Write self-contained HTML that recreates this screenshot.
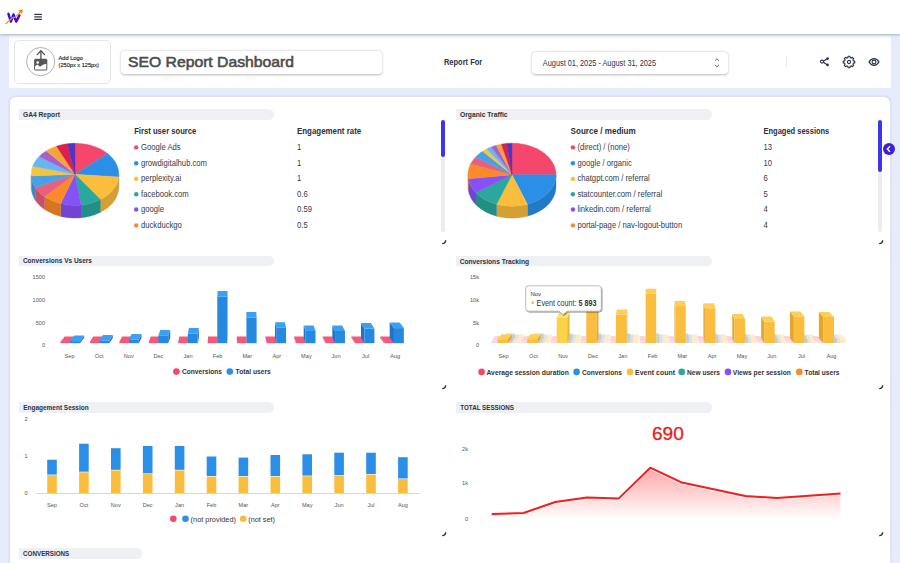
<!DOCTYPE html>
<html><head><meta charset="utf-8">
<style>
*{box-sizing:border-box;margin:0;padding:0}
html,body{width:900px;height:563px;overflow:hidden}
body{background:#e7ecfc;font-family:"Liberation Sans",sans-serif;position:relative}
.a{position:absolute}
.top{left:0;top:0;width:900px;height:34px;background:#fff;box-shadow:0 1px 2.5px rgba(80,95,140,0.45);z-index:2}
.hdr{left:9px;top:35px;width:882px;height:52.7px;background:linear-gradient(#eef0f3 0px,#f6f7f8 2px,#fff 5px)}
.card{left:8.7px;top:96.3px;width:882px;height:480px;background:#fff;border-radius:7px;border:1px solid #dde2ee;box-shadow:0 0 1.5px rgba(120,130,170,0.3)}
.tb{height:10.5px;background:#eef0f4;border-radius:0 6px 6px 0}
.sb{width:3.5px;background:#ececf0;border-radius:2px}
.sbt{width:3.5px;background:#3b35f0;border-radius:2px}
svg{position:absolute;left:0;top:0}
</style></head><body>

<div class="a top"></div>
<svg width="50" height="34" viewBox="0 0 50 34" style="left:0;top:0;z-index:3">
<path d="M8.4 13.8 L10.9 21.6 L13.5 14.4 L16.2 21.6 L19.4 15.4" fill="none" stroke="#3410e0" stroke-width="2.4" stroke-linejoin="round" stroke-linecap="round"/>
<path d="M6.2 23.5 L12.3 17.8 L15 17.2 L20.8 11.6" fill="none" stroke="#f7920f" stroke-width="1.3" stroke-linecap="round"/>
<path d="M23 9.3 L18.4 10.6 L21.7 13.8 Z" fill="#f07f10"/>
<rect x="34.3" y="13.8" width="7.6" height="1.2" fill="#2d3342"/>
<rect x="34.3" y="16.3" width="7.6" height="1.2" fill="#2d3342"/>
<rect x="34.3" y="18.8" width="7.6" height="1.2" fill="#2d3342"/>
</svg>
<div class="a hdr"></div>
<div class="a" style="left:13.5px;top:40.2px;width:97.5px;height:43.6px;border:1px solid #e4e6eb;border-radius:5px;background:#fff"></div>
<svg width="40" height="40" style="left:20px;top:42px">
<circle cx="20.7" cy="19.6" r="14.1" fill="none" stroke="#a0a0a0" stroke-width="0.8"/>
<rect x="14.1" y="16.7" width="13.2" height="11.8" rx="1.6" fill="#585858"/>
<path d="M15.1 27.5 L15.1 24.3 L17.3 22.6 L20 24.8 L23 22.8 L26.3 21.8 L26.3 27.5 Z" fill="#fff"/>
<circle cx="17.7" cy="20.5" r="1.3" fill="#fff"/>
<path d="M20.9 9 V20.5" stroke="#505050" stroke-width="1.3"/>
<path d="M17.2 12.6 L20.9 8.8 L24.6 12.6" fill="none" stroke="#505050" stroke-width="1.3" stroke-linecap="round"/>
</svg>
<div class="a" style="left:121px;top:51px;width:261px;height:23px;border-radius:4px;background:#fff;box-shadow:0 0.5px 2.5px rgba(0,0,0,0.28)"></div>
<div class="a" style="left:531.5px;top:52px;width:196px;height:22px;border-radius:4px;background:#fff;box-shadow:0 0.5px 2.5px rgba(0,0,0,0.28)"></div>
<svg width="12" height="14" style="left:711px;top:56px"><path d="M3.8 4.8 L5.9 2.8 L8 4.8 M3.8 8.8 L5.9 10.8 L8 8.8" fill="none" stroke="#555" stroke-width="0.9"/></svg>
<div class="a" style="left:785.5px;top:56px;width:1px;height:11px;background:#e4e6ec"></div>
<svg width="14" height="14" style="left:818px;top:55px">
<path d="M9.5 3.6 L5.4 6.2 M5.4 7.2 L9.5 9.9" fill="none" stroke="#2d3545" stroke-width="1.2"/>
<circle cx="9.6" cy="3.6" r="1.3" fill="#2d3545"/><circle cx="9.6" cy="9.9" r="1.3" fill="#2d3545"/><circle cx="4" cy="6.6" r="1.5" fill="none" stroke="#2d3545" stroke-width="1.1"/>
</svg>
<svg width="14" height="14" style="left:842.3px;top:54.8px">
<polygon points="5.28,2.84 5.84,2.65 6.09,1.27 7.91,1.27 8.16,2.65 8.72,2.84 9.25,3.1 10.41,2.31 11.69,3.59 10.9,4.75 11.16,5.28 11.35,5.84 12.73,6.09 12.73,7.91 11.35,8.16 11.16,8.72 10.9,9.25 11.69,10.41 10.41,11.69 9.25,10.9 8.72,11.16 8.16,11.35 7.91,12.73 6.09,12.73 5.84,11.35 5.28,11.16 4.75,10.9 3.59,11.69 2.31,10.41 3.1,9.25 2.84,8.72 2.65,8.16 1.27,7.91 1.27,6.09 2.65,5.84 2.84,5.28 3.1,4.75 2.31,3.59 3.59,2.31 4.75,3.1" fill="none" stroke="#2d3545" stroke-width="1.15" stroke-linejoin="round"/>
<circle cx="7" cy="7" r="1.6" fill="none" stroke="#2d3545" stroke-width="1.1"/>
</svg>
<svg width="14" height="10" style="left:867.2px;top:56.8px">
<path d="M2.1 5 C4.5 0.6 9.5 0.6 11.9 5 C9.5 9.4 4.5 9.4 2.1 5 Z" fill="none" stroke="#2d3545" stroke-width="1.3"/>
<circle cx="7" cy="5" r="1.9" fill="none" stroke="#2d3545" stroke-width="1.1"/>
</svg>
<div class="a card"></div>
<div class="a tb" style="left:18.7px;top:109.2px;width:255.5px;height:10.4px"></div>
<div class="a tb" style="left:456px;top:109.2px;width:255.5px;height:10.4px"></div>
<div class="a tb" style="left:18.7px;top:255.6px;width:255.5px;height:10.4px"></div>
<div class="a tb" style="left:456px;top:255.8px;width:255.5px;height:10.4px"></div>
<div class="a tb" style="left:18.7px;top:402.2px;width:255.5px;height:10.4px"></div>
<div class="a tb" style="left:456px;top:402.2px;width:255.5px;height:10.4px"></div>
<div class="a tb" style="left:18.7px;top:548.4px;width:123.5px;height:10.4px"></div>
<div class="a sb" style="left:441.2px;top:120px;height:112px"></div>
<div class="a sbt" style="left:441.2px;top:120px;height:36.5px"></div>
<div class="a sb" style="left:878.3px;top:120px;height:112px"></div>
<div class="a sbt" style="left:878.3px;top:120px;height:52px"></div>
<svg width="16" height="16" style="left:880.5px;top:141px"><circle cx="8" cy="8" r="6" fill="#3d1fd8"/><path d="M9 5.3 L6.3 8 L9 10.7" fill="none" stroke="#fff" stroke-width="1.3"/></svg>
<svg width="6" height="6" style="left:441px;top:238.5px"><path d="M1.2 4.6 Q4.6 4.6 4.6 1.2" fill="none" stroke="#2a2f3a" stroke-width="1.4"/></svg>
<svg width="6" height="6" style="left:878px;top:238.5px"><path d="M1.2 4.6 Q4.6 4.6 4.6 1.2" fill="none" stroke="#2a2f3a" stroke-width="1.4"/></svg>
<svg width="6" height="6" style="left:441px;top:383.5px"><path d="M1.2 4.6 Q4.6 4.6 4.6 1.2" fill="none" stroke="#2a2f3a" stroke-width="1.4"/></svg>
<svg width="6" height="6" style="left:878px;top:383.5px"><path d="M1.2 4.6 Q4.6 4.6 4.6 1.2" fill="none" stroke="#2a2f3a" stroke-width="1.4"/></svg>
<svg width="6" height="6" style="left:441px;top:531px"><path d="M1.2 4.6 Q4.6 4.6 4.6 1.2" fill="none" stroke="#2a2f3a" stroke-width="1.4"/></svg>
<svg width="6" height="6" style="left:878px;top:531px"><path d="M1.2 4.6 Q4.6 4.6 4.6 1.2" fill="none" stroke="#2a2f3a" stroke-width="1.4"/></svg>
<svg width="900" height="563">
<polygon points="118.8,174.3 118.63,177 118.63,189.8 118.8,187.1" fill="#2479c5" stroke="#2479c5" stroke-width="0.3"/>
<polygon points="118.63,177 118.36,178.66 117.97,180.31 117.45,181.95 116.8,183.56 116.03,185.14 115.15,186.69 114.14,188.21 113.03,189.68 111.8,191.11 110.46,192.49 109.02,193.82 107.49,195.09 105.85,196.3 104.13,197.45 102.32,198.53 100.43,199.54 100.43,212.34 102.32,211.33 104.13,210.25 105.85,209.1 107.49,207.89 109.02,206.62 110.46,205.29 111.8,203.91 113.03,202.48 114.14,201.01 115.15,199.49 116.03,197.94 116.8,196.36 117.45,194.75 117.97,193.11 118.36,191.46 118.63,189.8" fill="#d5a033" stroke="#d5a033" stroke-width="0.3"/>
<polygon points="100.43,199.54 98.5,200.46 96.49,201.31 94.43,202.08 92.31,202.78 90.14,203.39 87.93,203.92 85.68,204.36 83.4,204.72 81.1,205 81.1,217.8 83.4,217.52 85.68,217.16 87.93,216.72 90.14,216.19 92.31,215.58 94.43,214.88 96.49,214.11 98.5,213.26 100.43,212.34" fill="#238e85" stroke="#238e85" stroke-width="0.3"/>
<polygon points="81.1,205 78.82,205.18 76.53,205.28 74.24,205.3 71.94,205.22 69.66,205.07 67.39,204.83 65.15,204.51 62.93,204.1 60.74,203.61 60.74,216.41 62.93,216.9 65.15,217.31 67.39,217.63 69.66,217.87 71.94,218.02 74.24,218.1 76.53,218.08 78.82,217.98 81.1,217.8" fill="#7145d1" stroke="#7145d1" stroke-width="0.3"/>
<polygon points="60.74,203.61 58.5,203.02 56.32,202.34 54.18,201.58 52.11,200.73 50.11,199.81 48.18,198.81 46.34,197.74 44.57,196.6 44.57,209.4 46.34,210.54 48.18,211.61 50.11,212.61 52.11,213.53 54.18,214.38 56.32,215.14 58.5,215.82 60.74,216.41" fill="#d57524" stroke="#d57524" stroke-width="0.3"/>
<polygon points="44.57,196.6 42.97,195.44 41.45,194.23 40.02,192.96 38.69,191.63 37.46,190.27 36.33,188.85 35.3,187.4 35.3,200.2 36.33,201.65 37.46,203.07 38.69,204.43 40.02,205.76 41.45,207.03 42.97,208.24 44.57,209.4" fill="#c55169" stroke="#c55169" stroke-width="0.3"/>
<polygon points="35.3,187.4 34.35,185.84 33.52,184.25 32.81,182.62 32.23,180.97 31.77,179.3 31.45,177.62 31.26,175.92 31.26,188.72 31.45,190.42 31.77,192.1 32.23,193.77 32.81,195.42 33.52,197.05 34.35,198.64 35.3,200.2" fill="#3e88c3" stroke="#3e88c3" stroke-width="0.3"/>
<polygon points="31.26,175.92 31.2,174.3 31.2,187.1 31.26,188.72" fill="#cea638" stroke="#cea638" stroke-width="0.3"/>
<polygon points="75,174.3 75,143.3 77.29,143.34 79.58,143.47 81.85,143.68 84.11,143.98 86.34,144.36 88.53,144.82 90.7,145.36 92.82,145.98 94.88,146.68 96.9,147.45 98.86,148.3 100.74,149.22 102.56,150.21 104.31,151.26 105.97,152.38 107.55,153.56" fill="#f5476b" stroke="#f5476b" stroke-width="0.4" stroke-linejoin="round"/>
<polygon points="75,174.3 107.55,153.56 109.1,154.85 110.55,156.2 111.9,157.6 113.13,159.05 114.25,160.55 115.26,162.09 116.14,163.66 116.9,165.27 117.54,166.91 118.04,168.56 118.42,170.24 118.67,171.92 118.79,173.61 118.78,175.31 118.63,177" fill="#2b8fe8" stroke="#2b8fe8" stroke-width="0.4" stroke-linejoin="round"/>
<polygon points="75,174.3 118.63,177 118.36,178.66 117.97,180.31 117.45,181.95 116.8,183.56 116.03,185.14 115.15,186.69 114.14,188.21 113.03,189.68 111.8,191.11 110.46,192.49 109.02,193.82 107.49,195.09 105.85,196.3 104.13,197.45 102.32,198.53 100.43,199.54" fill="#fbbd3d" stroke="#fbbd3d" stroke-width="0.4" stroke-linejoin="round"/>
<polygon points="75,174.3 100.43,199.54 98.5,200.46 96.49,201.31 94.43,202.08 92.31,202.78 90.14,203.39 87.93,203.92 85.68,204.36 83.4,204.72 81.1,205" fill="#2aa89d" stroke="#2aa89d" stroke-width="0.4" stroke-linejoin="round"/>
<polygon points="75,174.3 81.1,205 78.82,205.18 76.53,205.28 74.24,205.3 71.94,205.22 69.66,205.07 67.39,204.83 65.15,204.51 62.93,204.1 60.74,203.61" fill="#8652f6" stroke="#8652f6" stroke-width="0.4" stroke-linejoin="round"/>
<polygon points="75,174.3 60.74,203.61 58.5,203.02 56.32,202.34 54.18,201.58 52.11,200.73 50.11,199.81 48.18,198.81 46.34,197.74 44.57,196.6" fill="#fb8a2b" stroke="#fb8a2b" stroke-width="0.4" stroke-linejoin="round"/>
<polygon points="75,174.3 44.57,196.6 42.97,195.44 41.45,194.23 40.02,192.96 38.69,191.63 37.46,190.27 36.33,188.85 35.3,187.4" fill="#e8607c" stroke="#e8607c" stroke-width="0.4" stroke-linejoin="round"/>
<polygon points="75,174.3 35.3,187.4 34.35,185.84 33.52,184.25 32.81,182.62 32.23,180.97 31.77,179.3 31.45,177.62 31.26,175.92" fill="#4aa0e6" stroke="#4aa0e6" stroke-width="0.4" stroke-linejoin="round"/>
<polygon points="75,174.3 31.26,175.92 31.2,174.3 31.26,172.68 31.44,171.06 31.74,169.45 32.16,167.85 32.69,166.28" fill="#f3c443" stroke="#f3c443" stroke-width="0.4" stroke-linejoin="round"/>
<polygon points="75,174.3 32.69,166.28 33.42,164.55 34.29,162.85 35.3,161.2 36.45,159.59 37.72,158.03 39.12,156.52" fill="#67b6ef" stroke="#67b6ef" stroke-width="0.4" stroke-linejoin="round"/>
<polygon points="75,174.3 39.12,156.52 40.72,155 42.45,153.56 44.3,152.19 46.26,150.9" fill="#a85fd2" stroke="#a85fd2" stroke-width="0.4" stroke-linejoin="round"/>
<polygon points="75,174.3 46.26,150.9 48.15,149.81 50.13,148.78 52.18,147.84 54.3,146.98 56.49,146.2" fill="#f7a43b" stroke="#f7a43b" stroke-width="0.4" stroke-linejoin="round"/>
<polygon points="75,174.3 56.49,146.2 58.59,145.56 60.74,144.99 62.93,144.5 65.15,144.09 67.39,143.77" fill="#dd1f4c" stroke="#dd1f4c" stroke-width="0.4" stroke-linejoin="round"/>
<polygon points="75,174.3 67.39,143.77 69.92,143.51 72.45,143.35 75,143.3" fill="#5432c4" stroke="#5432c4" stroke-width="0.4" stroke-linejoin="round"/>
<polygon points="556,174.7 555.94,176.36 555.76,178.02 555.45,179.66 555.02,181.3 554.48,182.91 553.82,184.5 553.04,186.07 552.14,187.6 551.14,189.1 550.02,190.55 548.8,191.97 547.48,193.33 546.06,194.64 544.54,195.9 542.94,197.1 541.24,198.24 539.47,199.31 537.62,200.31 535.7,201.24 533.71,202.1 531.66,202.88 529.56,203.58 527.41,204.21 527.41,216.21 529.56,215.58 531.66,214.88 533.71,214.1 535.7,213.24 537.62,212.31 539.47,211.31 541.24,210.24 542.94,209.1 544.54,207.9 546.06,206.64 547.48,205.33 548.8,203.97 550.02,202.55 551.14,201.1 552.14,199.6 553.04,198.07 553.82,196.5 554.48,194.91 555.02,193.3 555.45,191.66 555.76,190.02 555.94,188.36 556,186.7" fill="#2479c5" stroke="#2479c5" stroke-width="0.3"/>
<polygon points="527.41,204.21 525.12,204.77 522.79,205.24 520.42,205.62 518.04,205.9 515.63,206.09 513.21,206.19 510.79,206.19 508.37,206.09 505.96,205.9 503.58,205.62 501.21,205.24 498.88,204.77 496.59,204.21 496.59,216.21 498.88,216.77 501.21,217.24 503.58,217.62 505.96,217.9 508.37,218.09 510.79,218.19 513.21,218.19 515.63,218.09 518.04,217.9 520.42,217.62 522.79,217.24 525.12,216.77 527.41,216.21" fill="#d5a033" stroke="#d5a033" stroke-width="0.3"/>
<polygon points="496.59,204.21 494.36,203.56 492.18,202.82 490.06,202 488.01,201.1 486.02,200.13 484.12,199.07 482.3,197.94 480.57,196.74 478.93,195.48 477.39,194.15 475.96,192.77 475.96,204.77 477.39,206.15 478.93,207.48 480.57,208.74 482.3,209.94 484.12,211.07 486.02,212.13 488.01,213.1 490.06,214 492.18,214.82 494.36,215.56 496.59,216.21" fill="#238e85" stroke="#238e85" stroke-width="0.3"/>
<polygon points="475.96,192.77 474.66,191.37 473.48,189.92 472.4,188.43 471.43,186.9 470.58,185.33 469.85,183.73 469.24,182.11 468.74,180.47 468.38,178.81 468.38,190.81 468.74,192.47 469.24,194.11 469.85,195.73 470.58,197.33 471.43,198.9 472.4,200.43 473.48,201.92 474.66,203.37 475.96,204.77" fill="#7145d1" stroke="#7145d1" stroke-width="0.3"/>
<polygon points="468.38,178.81 468.09,176.76 468,174.7 468,186.7 468.09,188.76 468.38,190.81" fill="#d57524" stroke="#d57524" stroke-width="0.3"/>
<polygon points="512,174.7 512,143.2 514.3,143.24 516.6,143.37 518.88,143.59 521.15,143.89 523.39,144.27 525.6,144.74 527.77,145.29 529.9,145.92 531.98,146.63 534,147.42 535.96,148.28 537.86,149.22 539.69,150.22 541.44,151.29 543.11,152.43 544.7,153.62 546.19,154.88 547.6,156.18 548.9,157.54 550.11,158.95 551.2,160.4 552.2,161.89 553.08,163.41 553.85,164.97 554.5,166.55 555.04,168.15 555.46,169.77 555.76,171.41 555.94,173.05 556,174.7" fill="#f5476b" stroke="#f5476b" stroke-width="0.4" stroke-linejoin="round"/>
<polygon points="512,174.7 556,174.7 555.94,176.36 555.76,178.02 555.45,179.66 555.02,181.3 554.48,182.91 553.82,184.5 553.04,186.07 552.14,187.6 551.14,189.1 550.02,190.55 548.8,191.97 547.48,193.33 546.06,194.64 544.54,195.9 542.94,197.1 541.24,198.24 539.47,199.31 537.62,200.31 535.7,201.24 533.71,202.1 531.66,202.88 529.56,203.58 527.41,204.21" fill="#2b8fe8" stroke="#2b8fe8" stroke-width="0.4" stroke-linejoin="round"/>
<polygon points="512,174.7 527.41,204.21 525.12,204.77 522.79,205.24 520.42,205.62 518.04,205.9 515.63,206.09 513.21,206.19 510.79,206.19 508.37,206.09 505.96,205.9 503.58,205.62 501.21,205.24 498.88,204.77 496.59,204.21" fill="#fbbd3d" stroke="#fbbd3d" stroke-width="0.4" stroke-linejoin="round"/>
<polygon points="512,174.7 496.59,204.21 494.36,203.56 492.18,202.82 490.06,202 488.01,201.1 486.02,200.13 484.12,199.07 482.3,197.94 480.57,196.74 478.93,195.48 477.39,194.15 475.96,192.77" fill="#2aa89d" stroke="#2aa89d" stroke-width="0.4" stroke-linejoin="round"/>
<polygon points="512,174.7 475.96,192.77 474.66,191.37 473.48,189.92 472.4,188.43 471.43,186.9 470.58,185.33 469.85,183.73 469.24,182.11 468.74,180.47 468.38,178.81" fill="#8652f6" stroke="#8652f6" stroke-width="0.4" stroke-linejoin="round"/>
<polygon points="512,174.7 468.38,178.81 468.13,177.14 468.01,175.46 468.02,173.78 468.15,172.11 468.4,170.44 468.78,168.78 469.29,167.14 469.91,165.52 470.65,163.93" fill="#fb8a2b" stroke="#fb8a2b" stroke-width="0.4" stroke-linejoin="round"/>
<polygon points="512,174.7 470.65,163.93 471.65,162.14 472.8,160.4 474.09,158.71 475.52,157.09" fill="#e8607c" stroke="#e8607c" stroke-width="0.4" stroke-linejoin="round"/>
<polygon points="512,174.7 475.52,157.09 477.09,155.52 478.79,154.03 480.62,152.62 482.56,151.29" fill="#4aa0e6" stroke="#4aa0e6" stroke-width="0.4" stroke-linejoin="round"/>
<polygon points="512,174.7 482.56,151.29 484.61,150.05 486.76,148.9" fill="#f3c443" stroke="#f3c443" stroke-width="0.4" stroke-linejoin="round"/>
<polygon points="512,174.7 486.76,148.9 489.01,147.84 491.34,146.89" fill="#67b6ef" stroke="#67b6ef" stroke-width="0.4" stroke-linejoin="round"/>
<polygon points="512,174.7 491.34,146.89 493.75,146.04 496.23,145.29" fill="#a85fd2" stroke="#a85fd2" stroke-width="0.4" stroke-linejoin="round"/>
<polygon points="512,174.7 496.23,145.29 498.77,144.66 501.36,144.14" fill="#f7a43b" stroke="#f7a43b" stroke-width="0.4" stroke-linejoin="round"/>
<polygon points="512,174.7 501.36,144.14 503.98,143.73 506.64,143.43" fill="#dd1f4c" stroke="#dd1f4c" stroke-width="0.4" stroke-linejoin="round"/>
<polygon points="512,174.7 506.64,143.43 509.31,143.26 512,143.2" fill="#5432c4" stroke="#5432c4" stroke-width="0.4" stroke-linejoin="round"/>
</svg>
<svg width="900" height="563"><circle cx="136.2" cy="147.4" r="2.2" fill="#f5476b"/><circle cx="136.2" cy="163.2" r="2.2" fill="#2b8fe8"/><circle cx="136.2" cy="178.9" r="2.2" fill="#fbbd3d"/><circle cx="136.2" cy="194.2" r="2.2" fill="#2aa89d"/><circle cx="136.2" cy="209.5" r="2.2" fill="#8652f6"/><circle cx="136.2" cy="225.4" r="2.2" fill="#fb8a2b"/><circle cx="572.9" cy="147.4" r="2.2" fill="#f5476b"/><circle cx="572.9" cy="163.2" r="2.2" fill="#2b8fe8"/><circle cx="572.9" cy="178.9" r="2.2" fill="#fbbd3d"/><circle cx="572.9" cy="194.2" r="2.2" fill="#2aa89d"/><circle cx="572.9" cy="209.5" r="2.2" fill="#8652f6"/><circle cx="572.9" cy="225.4" r="2.2" fill="#fb8a2b"/></svg>
<svg width="900" height="563">
<g><polygon points="70.04,343.2 70.04,342.1 74.27,336.6 74.27,337.7" fill="#d23d5c"/><rect x="60.44" y="342.1" width="9.6" height="1.1" fill="#e94a6a"/><polygon points="60.44,342.1 70.04,342.1 74.27,336.6 64.67,336.6" fill="#f7577a"/></g>
<g><polygon points="79.94,343.2 79.94,341.1 84.17,335.6 84.17,337.7" fill="#1d74c8"/><rect x="70.04" y="341.1" width="9.9" height="2.1" fill="#2689e0"/><polygon points="70.04,341.1 79.94,341.1 84.17,335.6 74.27,335.6" fill="#3aa0f5"/></g>
<g><polygon points="99.49,343.2 99.49,342.1 102.94,336.6 102.94,337.7" fill="#d23d5c"/><rect x="89.89" y="342.1" width="9.6" height="1.1" fill="#e94a6a"/><polygon points="89.89,342.1 99.49,342.1 102.94,336.6 93.34,336.6" fill="#f7577a"/></g>
<g><polygon points="109.39,343.2 109.39,340.5 112.84,335 112.84,337.7" fill="#1d74c8"/><rect x="99.49" y="340.5" width="9.9" height="2.7" fill="#2689e0"/><polygon points="99.49,340.5 109.39,340.5 112.84,335 102.94,335" fill="#3aa0f5"/></g>
<g><polygon points="128.94,343.2 128.94,342.1 131.62,336.6 131.62,337.7" fill="#d23d5c"/><rect x="119.34" y="342.1" width="9.6" height="1.1" fill="#e94a6a"/><polygon points="119.34,342.1 128.94,342.1 131.62,336.6 122.02,336.6" fill="#f7577a"/></g>
<g><polygon points="138.84,343.2 138.84,339.5 141.52,334 141.52,337.7" fill="#1d74c8"/><rect x="128.94" y="339.5" width="9.9" height="3.7" fill="#2689e0"/><polygon points="128.94,339.5 138.84,339.5 141.52,334 131.62,334" fill="#3aa0f5"/></g>
<g><polygon points="158.38,343.2 158.38,342.1 160.3,336.6 160.3,337.7" fill="#d23d5c"/><rect x="148.78" y="342.1" width="9.6" height="1.1" fill="#e94a6a"/><polygon points="148.78,342.1 158.38,342.1 160.3,336.6 150.7,336.6" fill="#f7577a"/></g>
<g><polygon points="168.28,343.2 168.28,335.4 170.2,329.9 170.2,337.7" fill="#1d74c8"/><rect x="158.38" y="335.4" width="9.9" height="7.8" fill="#2689e0"/><polygon points="158.38,335.4 168.28,335.4 170.2,329.9 160.3,329.9" fill="#3aa0f5"/></g>
<g><polygon points="187.83,343.2 187.83,342.1 188.97,336.6 188.97,337.7" fill="#d23d5c"/><rect x="178.23" y="342.1" width="9.6" height="1.1" fill="#e94a6a"/><polygon points="178.23,342.1 187.83,342.1 188.97,336.6 179.37,336.6" fill="#f7577a"/></g>
<g><polygon points="197.73,343.2 197.73,333.5 198.87,328 198.87,337.7" fill="#1d74c8"/><rect x="187.83" y="333.5" width="9.9" height="9.7" fill="#2689e0"/><polygon points="187.83,333.5 197.73,333.5 198.87,328 188.97,328" fill="#3aa0f5"/></g>
<g><polygon points="217.27,343.2 217.27,342.1 217.65,336.6 217.65,337.7" fill="#d23d5c"/><rect x="207.67" y="342.1" width="9.6" height="1.1" fill="#e94a6a"/><polygon points="207.67,342.1 217.27,342.1 217.65,336.6 208.05,336.6" fill="#f7577a"/></g>
<g><polygon points="227.17,343.2 227.17,296.5 227.55,291 227.55,337.7" fill="#1d74c8"/><rect x="217.27" y="296.5" width="9.9" height="46.7" fill="#2689e0"/><polygon points="217.27,296.5 227.17,296.5 227.55,291 217.65,291" fill="#3aa0f5"/></g>
<g><polygon points="237.12,343.2 237.12,342.1 236.73,336.6 236.73,337.7" fill="#d23d5c"/><rect x="237.12" y="342.1" width="9.6" height="1.1" fill="#e94a6a"/><polygon points="237.12,342.1 246.72,342.1 246.33,336.6 236.73,336.6" fill="#f7577a"/></g>
<g><polygon points="246.72,343.2 246.72,317.5 246.33,312 246.33,337.7" fill="#1d74c8"/><rect x="246.72" y="317.5" width="9.9" height="25.7" fill="#2689e0"/><polygon points="246.72,317.5 256.62,317.5 256.23,312 246.33,312" fill="#3aa0f5"/></g>
<g><polygon points="266.57,343.2 266.57,342.1 265.4,336.6 265.4,337.7" fill="#d23d5c"/><rect x="266.57" y="342.1" width="9.6" height="1.1" fill="#e94a6a"/><polygon points="266.57,342.1 276.17,342.1 275,336.6 265.4,336.6" fill="#f7577a"/></g>
<g><polygon points="276.17,343.2 276.17,327.7 275,322.2 275,337.7" fill="#1d74c8"/><rect x="276.17" y="327.7" width="9.9" height="15.5" fill="#2689e0"/><polygon points="276.17,327.7 286.07,327.7 284.9,322.2 275,322.2" fill="#3aa0f5"/></g>
<g><polygon points="296.01,343.2 296.01,342.1 294.08,336.6 294.08,337.7" fill="#d23d5c"/><rect x="296.01" y="342.1" width="9.6" height="1.1" fill="#e94a6a"/><polygon points="296.01,342.1 305.61,342.1 303.68,336.6 294.08,336.6" fill="#f7577a"/></g>
<g><polygon points="305.61,343.2 305.61,330.9 303.68,325.4 303.68,337.7" fill="#1d74c8"/><rect x="305.61" y="330.9" width="9.9" height="12.3" fill="#2689e0"/><polygon points="305.61,330.9 315.51,330.9 313.58,325.4 303.68,325.4" fill="#3aa0f5"/></g>
<g><polygon points="325.46,343.2 325.46,342.1 322.76,336.6 322.76,337.7" fill="#d23d5c"/><rect x="325.46" y="342.1" width="9.6" height="1.1" fill="#e94a6a"/><polygon points="325.46,342.1 335.06,342.1 332.36,336.6 322.76,336.6" fill="#f7577a"/></g>
<g><polygon points="335.06,343.2 335.06,330.9 332.36,325.4 332.36,337.7" fill="#1d74c8"/><rect x="335.06" y="330.9" width="9.9" height="12.3" fill="#2689e0"/><polygon points="335.06,330.9 344.96,330.9 342.26,325.4 332.36,325.4" fill="#3aa0f5"/></g>
<g><polygon points="354.91,343.2 354.91,342.1 351.43,336.6 351.43,337.7" fill="#d23d5c"/><rect x="354.91" y="342.1" width="9.6" height="1.1" fill="#e94a6a"/><polygon points="354.91,342.1 364.51,342.1 361.03,336.6 351.43,336.6" fill="#f7577a"/></g>
<g><polygon points="364.51,343.2 364.51,328.5 361.03,323 361.03,337.7" fill="#1d74c8"/><rect x="364.51" y="328.5" width="9.9" height="14.7" fill="#2689e0"/><polygon points="364.51,328.5 374.41,328.5 370.93,323 361.03,323" fill="#3aa0f5"/></g>
<g><polygon points="384.35,343.2 384.35,342.1 380.11,336.6 380.11,337.7" fill="#d23d5c"/><rect x="384.35" y="342.1" width="9.6" height="1.1" fill="#e94a6a"/><polygon points="384.35,342.1 393.95,342.1 389.71,336.6 380.11,336.6" fill="#f7577a"/></g>
<g><polygon points="393.95,343.2 393.95,328.1 389.71,322.6 389.71,337.7" fill="#1d74c8"/><rect x="393.95" y="328.1" width="9.9" height="15.1" fill="#2689e0"/><polygon points="393.95,328.1 403.85,328.1 399.61,322.6 389.71,322.6" fill="#3aa0f5"/></g>
<circle cx="176.4" cy="371.6" r="3.3" fill="#f5476b"/>
<circle cx="229.8" cy="371.6" r="3.3" fill="#2b8fe8"/>
<g opacity="0.45"><polygon points="496.39,343 496.39,341.5 500.32,336 500.32,337.5" fill="#f7a0b4"/><rect x="491.39" y="341.5" width="5" height="1.5" fill="#f7a0b4"/><polygon points="491.39,341.5 496.39,341.5 500.32,336 495.32,336" fill="#f7a0b4"/></g>
<g opacity="0.6"><polygon points="497.89,343 497.89,343 501.82,337.5 501.82,337.5" fill="#c8c0f0"/><rect x="496.39" y="343" width="1.5" height="0" fill="#c8c0f0"/><polygon points="496.39,343 497.89,343 501.82,337.5 500.32,337.5" fill="#c8c0f0"/></g>
<g opacity="0.45"><polygon points="510.89,343 510.89,339 514.82,333.5 514.82,337.5" fill="#b9a45c"/><rect x="502.39" y="339" width="8.5" height="4" fill="#b9a45c"/><polygon points="502.39,339 510.89,339 514.82,333.5 506.32,333.5" fill="#b9a45c"/></g>
<g opacity="0.5"><polygon points="514.39,343 514.39,340 518.32,334.5 518.32,337.5" fill="#a9c6e6"/><rect x="509.39" y="340" width="5" height="3" fill="#a9c6e6"/><polygon points="509.39,340 514.39,340 518.32,334.5 513.32,334.5" fill="#a9c6e6"/></g>
<g opacity="0.7"><polygon points="519.89,343 519.89,340 523.82,334.5 523.82,337.5" fill="#fde3b8"/><rect x="513.89" y="340" width="6" height="3" fill="#fde3b8"/><polygon points="513.89,340 519.89,340 523.82,334.5 517.82,334.5" fill="#fde3b8"/></g>
<g><polygon points="507.89,343 507.89,339.3 511.82,334.3 511.82,338" fill="#e3a52a"/><rect x="497.39" y="339.3" width="10.5" height="3.7" fill="#fbbd3d"/><polygon points="497.39,339.3 507.89,339.3 511.82,334.3 501.32,334.3" fill="#fdd055"/></g>
<g opacity="0.45"><polygon points="526.03,343 526.03,341.5 529.19,336 529.19,337.5" fill="#f7a0b4"/><rect x="521.03" y="341.5" width="5" height="1.5" fill="#f7a0b4"/><polygon points="521.03,341.5 526.03,341.5 529.19,336 524.19,336" fill="#f7a0b4"/></g>
<g opacity="0.6"><polygon points="527.53,343 527.53,343 530.69,337.5 530.69,337.5" fill="#c8c0f0"/><rect x="526.03" y="343" width="1.5" height="0" fill="#c8c0f0"/><polygon points="526.03,343 527.53,343 530.69,337.5 529.19,337.5" fill="#c8c0f0"/></g>
<g opacity="0.45"><polygon points="540.53,343 540.53,339 543.69,333.5 543.69,337.5" fill="#b9a45c"/><rect x="532.03" y="339" width="8.5" height="4" fill="#b9a45c"/><polygon points="532.03,339 540.53,339 543.69,333.5 535.19,333.5" fill="#b9a45c"/></g>
<g opacity="0.5"><polygon points="544.03,343 544.03,340 547.19,334.5 547.19,337.5" fill="#a9c6e6"/><rect x="539.03" y="340" width="5" height="3" fill="#a9c6e6"/><polygon points="539.03,340 544.03,340 547.19,334.5 542.19,334.5" fill="#a9c6e6"/></g>
<g opacity="0.7"><polygon points="549.53,343 549.53,340 552.69,334.5 552.69,337.5" fill="#fde3b8"/><rect x="543.53" y="340" width="6" height="3" fill="#fde3b8"/><polygon points="543.53,340 549.53,340 552.69,334.5 546.69,334.5" fill="#fde3b8"/></g>
<g><polygon points="537.53,343 537.53,339.3 540.69,334.3 540.69,338" fill="#e3a52a"/><rect x="527.03" y="339.3" width="10.5" height="3.7" fill="#fbbd3d"/><polygon points="527.03,339.3 537.53,339.3 540.69,334.3 530.19,334.3" fill="#fdd055"/></g>
<g opacity="0.45"><polygon points="555.68,343 555.68,341.5 558.06,336 558.06,337.5" fill="#f7a0b4"/><rect x="550.68" y="341.5" width="5" height="1.5" fill="#f7a0b4"/><polygon points="550.68,341.5 555.68,341.5 558.06,336 553.06,336" fill="#f7a0b4"/></g>
<g opacity="0.6"><polygon points="557.18,343 557.18,343 559.56,337.5 559.56,337.5" fill="#c8c0f0"/><rect x="555.68" y="343" width="1.5" height="0" fill="#c8c0f0"/><polygon points="555.68,343 557.18,343 559.56,337.5 558.06,337.5" fill="#c8c0f0"/></g>
<g opacity="0.45"><polygon points="570.18,343 570.18,339 572.56,333.5 572.56,337.5" fill="#b9a45c"/><rect x="561.68" y="339" width="8.5" height="4" fill="#b9a45c"/><polygon points="561.68,339 570.18,339 572.56,333.5 564.06,333.5" fill="#b9a45c"/></g>
<g opacity="0.5"><polygon points="573.68,343 573.68,340 576.06,334.5 576.06,337.5" fill="#a9c6e6"/><rect x="568.68" y="340" width="5" height="3" fill="#a9c6e6"/><polygon points="568.68,340 573.68,340 576.06,334.5 571.06,334.5" fill="#a9c6e6"/></g>
<g opacity="0.7"><polygon points="579.18,343 579.18,340 581.56,334.5 581.56,337.5" fill="#fde3b8"/><rect x="573.18" y="340" width="6" height="3" fill="#fde3b8"/><polygon points="573.18,340 579.18,340 581.56,334.5 575.56,334.5" fill="#fde3b8"/></g>
<g><polygon points="567.18,343 567.18,317.4 569.56,312.4 569.56,338" fill="#e8b838"/><rect x="556.68" y="317.4" width="10.5" height="25.6" fill="#fcd24a"/><polygon points="556.68,317.4 567.18,317.4 569.56,312.4 559.06,312.4" fill="#fde070"/></g>
<g opacity="0.45"><polygon points="585.32,343 585.32,341.5 586.93,336 586.93,337.5" fill="#f7a0b4"/><rect x="580.32" y="341.5" width="5" height="1.5" fill="#f7a0b4"/><polygon points="580.32,341.5 585.32,341.5 586.93,336 581.93,336" fill="#f7a0b4"/></g>
<g opacity="0.6"><polygon points="586.82,343 586.82,343 588.43,337.5 588.43,337.5" fill="#c8c0f0"/><rect x="585.32" y="343" width="1.5" height="0" fill="#c8c0f0"/><polygon points="585.32,343 586.82,343 588.43,337.5 586.93,337.5" fill="#c8c0f0"/></g>
<g opacity="0.45"><polygon points="599.82,343 599.82,339 601.43,333.5 601.43,337.5" fill="#b9a45c"/><rect x="591.32" y="339" width="8.5" height="4" fill="#b9a45c"/><polygon points="591.32,339 599.82,339 601.43,333.5 592.93,333.5" fill="#b9a45c"/></g>
<g opacity="0.5"><polygon points="603.32,343 603.32,340 604.93,334.5 604.93,337.5" fill="#a9c6e6"/><rect x="598.32" y="340" width="5" height="3" fill="#a9c6e6"/><polygon points="598.32,340 603.32,340 604.93,334.5 599.93,334.5" fill="#a9c6e6"/></g>
<g opacity="0.7"><polygon points="608.82,343 608.82,340 610.43,334.5 610.43,337.5" fill="#fde3b8"/><rect x="602.82" y="340" width="6" height="3" fill="#fde3b8"/><polygon points="602.82,340 608.82,340 610.43,334.5 604.43,334.5" fill="#fde3b8"/></g>
<g><polygon points="596.82,343 596.82,305 598.43,300 598.43,338" fill="#e3a52a"/><rect x="586.32" y="305" width="10.5" height="38" fill="#fbbd3d"/><polygon points="586.32,305 596.82,305 598.43,300 587.93,300" fill="#fdd055"/></g>
<g opacity="0.45"><polygon points="614.97,343 614.97,341.5 615.8,336 615.8,337.5" fill="#f7a0b4"/><rect x="609.97" y="341.5" width="5" height="1.5" fill="#f7a0b4"/><polygon points="609.97,341.5 614.97,341.5 615.8,336 610.8,336" fill="#f7a0b4"/></g>
<g opacity="0.6"><polygon points="616.47,343 616.47,343 617.3,337.5 617.3,337.5" fill="#c8c0f0"/><rect x="614.97" y="343" width="1.5" height="0" fill="#c8c0f0"/><polygon points="614.97,343 616.47,343 617.3,337.5 615.8,337.5" fill="#c8c0f0"/></g>
<g opacity="0.45"><polygon points="629.47,343 629.47,339 630.3,333.5 630.3,337.5" fill="#b9a45c"/><rect x="620.97" y="339" width="8.5" height="4" fill="#b9a45c"/><polygon points="620.97,339 629.47,339 630.3,333.5 621.8,333.5" fill="#b9a45c"/></g>
<g opacity="0.5"><polygon points="632.97,343 632.97,340 633.8,334.5 633.8,337.5" fill="#a9c6e6"/><rect x="627.97" y="340" width="5" height="3" fill="#a9c6e6"/><polygon points="627.97,340 632.97,340 633.8,334.5 628.8,334.5" fill="#a9c6e6"/></g>
<g opacity="0.7"><polygon points="638.47,343 638.47,340 639.3,334.5 639.3,337.5" fill="#fde3b8"/><rect x="632.47" y="340" width="6" height="3" fill="#fde3b8"/><polygon points="632.47,340 638.47,340 639.3,334.5 633.3,334.5" fill="#fde3b8"/></g>
<g><polygon points="626.47,343 626.47,314.5 627.3,309.5 627.3,338" fill="#e3a52a"/><rect x="615.97" y="314.5" width="10.5" height="28.5" fill="#fbbd3d"/><polygon points="615.97,314.5 626.47,314.5 627.3,309.5 616.8,309.5" fill="#fdd055"/></g>
<g opacity="0.45"><polygon points="644.61,343 644.61,341.5 644.67,336 644.67,337.5" fill="#f7a0b4"/><rect x="639.61" y="341.5" width="5" height="1.5" fill="#f7a0b4"/><polygon points="639.61,341.5 644.61,341.5 644.67,336 639.67,336" fill="#f7a0b4"/></g>
<g opacity="0.6"><polygon points="646.11,343 646.11,343 646.17,337.5 646.17,337.5" fill="#c8c0f0"/><rect x="644.61" y="343" width="1.5" height="0" fill="#c8c0f0"/><polygon points="644.61,343 646.11,343 646.17,337.5 644.67,337.5" fill="#c8c0f0"/></g>
<g opacity="0.45"><polygon points="659.11,343 659.11,339 659.17,333.5 659.17,337.5" fill="#b9a45c"/><rect x="650.61" y="339" width="8.5" height="4" fill="#b9a45c"/><polygon points="650.61,339 659.11,339 659.17,333.5 650.67,333.5" fill="#b9a45c"/></g>
<g opacity="0.5"><polygon points="662.61,343 662.61,340 662.67,334.5 662.67,337.5" fill="#a9c6e6"/><rect x="657.61" y="340" width="5" height="3" fill="#a9c6e6"/><polygon points="657.61,340 662.61,340 662.67,334.5 657.67,334.5" fill="#a9c6e6"/></g>
<g opacity="0.7"><polygon points="668.11,343 668.11,340 668.17,334.5 668.17,337.5" fill="#fde3b8"/><rect x="662.11" y="340" width="6" height="3" fill="#fde3b8"/><polygon points="662.11,340 668.11,340 668.17,334.5 662.17,334.5" fill="#fde3b8"/></g>
<g><polygon points="656.11,343 656.11,293.7 656.17,288.7 656.17,338" fill="#e3a52a"/><rect x="645.61" y="293.7" width="10.5" height="49.3" fill="#fbbd3d"/><polygon points="645.61,293.7 656.11,293.7 656.17,288.7 645.67,288.7" fill="#fdd055"/></g>
<g opacity="0.45"><polygon points="669.26,343 669.26,341.5 668.55,336 668.55,337.5" fill="#f7a0b4"/><rect x="669.26" y="341.5" width="5" height="1.5" fill="#f7a0b4"/><polygon points="669.26,341.5 674.26,341.5 673.55,336 668.55,336" fill="#f7a0b4"/></g>
<g opacity="0.6"><polygon points="674.26,343 674.26,343 673.55,337.5 673.55,337.5" fill="#c8c0f0"/><rect x="674.26" y="343" width="1.5" height="0" fill="#c8c0f0"/><polygon points="674.26,343 675.76,343 675.05,337.5 673.55,337.5" fill="#c8c0f0"/></g>
<g opacity="0.45"><polygon points="680.26,343 680.26,339 679.55,333.5 679.55,337.5" fill="#b9a45c"/><rect x="680.26" y="339" width="8.5" height="4" fill="#b9a45c"/><polygon points="680.26,339 688.76,339 688.05,333.5 679.55,333.5" fill="#b9a45c"/></g>
<g opacity="0.5"><polygon points="687.26,343 687.26,340 686.55,334.5 686.55,337.5" fill="#a9c6e6"/><rect x="687.26" y="340" width="5" height="3" fill="#a9c6e6"/><polygon points="687.26,340 692.26,340 691.55,334.5 686.55,334.5" fill="#a9c6e6"/></g>
<g opacity="0.7"><polygon points="691.76,343 691.76,340 691.05,334.5 691.05,337.5" fill="#fde3b8"/><rect x="691.76" y="340" width="6" height="3" fill="#fde3b8"/><polygon points="691.76,340 697.76,340 697.05,334.5 691.05,334.5" fill="#fde3b8"/></g>
<g><polygon points="675.26,343 675.26,306.1 674.55,301.1 674.55,338" fill="#e3a52a"/><rect x="675.26" y="306.1" width="10.5" height="36.9" fill="#fbbd3d"/><polygon points="675.26,306.1 685.76,306.1 685.05,301.1 674.55,301.1" fill="#fdd055"/></g>
<g opacity="0.45"><polygon points="698.9,343 698.9,341.5 697.42,336 697.42,337.5" fill="#f7a0b4"/><rect x="698.9" y="341.5" width="5" height="1.5" fill="#f7a0b4"/><polygon points="698.9,341.5 703.9,341.5 702.42,336 697.42,336" fill="#f7a0b4"/></g>
<g opacity="0.6"><polygon points="703.9,343 703.9,343 702.42,337.5 702.42,337.5" fill="#c8c0f0"/><rect x="703.9" y="343" width="1.5" height="0" fill="#c8c0f0"/><polygon points="703.9,343 705.4,343 703.92,337.5 702.42,337.5" fill="#c8c0f0"/></g>
<g opacity="0.45"><polygon points="709.9,343 709.9,339 708.42,333.5 708.42,337.5" fill="#b9a45c"/><rect x="709.9" y="339" width="8.5" height="4" fill="#b9a45c"/><polygon points="709.9,339 718.4,339 716.92,333.5 708.42,333.5" fill="#b9a45c"/></g>
<g opacity="0.5"><polygon points="716.9,343 716.9,340 715.42,334.5 715.42,337.5" fill="#a9c6e6"/><rect x="716.9" y="340" width="5" height="3" fill="#a9c6e6"/><polygon points="716.9,340 721.9,340 720.42,334.5 715.42,334.5" fill="#a9c6e6"/></g>
<g opacity="0.7"><polygon points="721.4,343 721.4,340 719.92,334.5 719.92,337.5" fill="#fde3b8"/><rect x="721.4" y="340" width="6" height="3" fill="#fde3b8"/><polygon points="721.4,340 727.4,340 725.92,334.5 719.92,334.5" fill="#fde3b8"/></g>
<g><polygon points="704.9,343 704.9,308.2 703.42,303.2 703.42,338" fill="#e3a52a"/><rect x="704.9" y="308.2" width="10.5" height="34.8" fill="#fbbd3d"/><polygon points="704.9,308.2 715.4,308.2 713.92,303.2 703.42,303.2" fill="#fdd055"/></g>
<g opacity="0.45"><polygon points="728.55,343 728.55,341.5 726.29,336 726.29,337.5" fill="#f7a0b4"/><rect x="728.55" y="341.5" width="5" height="1.5" fill="#f7a0b4"/><polygon points="728.55,341.5 733.55,341.5 731.29,336 726.29,336" fill="#f7a0b4"/></g>
<g opacity="0.6"><polygon points="733.55,343 733.55,343 731.29,337.5 731.29,337.5" fill="#c8c0f0"/><rect x="733.55" y="343" width="1.5" height="0" fill="#c8c0f0"/><polygon points="733.55,343 735.05,343 732.79,337.5 731.29,337.5" fill="#c8c0f0"/></g>
<g opacity="0.45"><polygon points="739.55,343 739.55,339 737.29,333.5 737.29,337.5" fill="#b9a45c"/><rect x="739.55" y="339" width="8.5" height="4" fill="#b9a45c"/><polygon points="739.55,339 748.05,339 745.79,333.5 737.29,333.5" fill="#b9a45c"/></g>
<g opacity="0.5"><polygon points="746.55,343 746.55,340 744.29,334.5 744.29,337.5" fill="#a9c6e6"/><rect x="746.55" y="340" width="5" height="3" fill="#a9c6e6"/><polygon points="746.55,340 751.55,340 749.29,334.5 744.29,334.5" fill="#a9c6e6"/></g>
<g opacity="0.7"><polygon points="751.05,343 751.05,340 748.79,334.5 748.79,337.5" fill="#fde3b8"/><rect x="751.05" y="340" width="6" height="3" fill="#fde3b8"/><polygon points="751.05,340 757.05,340 754.79,334.5 748.79,334.5" fill="#fde3b8"/></g>
<g><polygon points="734.55,343 734.55,319 732.29,314 732.29,338" fill="#e3a52a"/><rect x="734.55" y="319" width="10.5" height="24" fill="#fbbd3d"/><polygon points="734.55,319 745.05,319 742.79,314 732.29,314" fill="#fdd055"/></g>
<g opacity="0.45"><polygon points="758.19,343 758.19,341.5 755.16,336 755.16,337.5" fill="#f7a0b4"/><rect x="758.19" y="341.5" width="5" height="1.5" fill="#f7a0b4"/><polygon points="758.19,341.5 763.19,341.5 760.16,336 755.16,336" fill="#f7a0b4"/></g>
<g opacity="0.6"><polygon points="763.19,343 763.19,343 760.16,337.5 760.16,337.5" fill="#c8c0f0"/><rect x="763.19" y="343" width="1.5" height="0" fill="#c8c0f0"/><polygon points="763.19,343 764.69,343 761.66,337.5 760.16,337.5" fill="#c8c0f0"/></g>
<g opacity="0.45"><polygon points="769.19,343 769.19,339 766.16,333.5 766.16,337.5" fill="#b9a45c"/><rect x="769.19" y="339" width="8.5" height="4" fill="#b9a45c"/><polygon points="769.19,339 777.69,339 774.66,333.5 766.16,333.5" fill="#b9a45c"/></g>
<g opacity="0.5"><polygon points="776.19,343 776.19,340 773.16,334.5 773.16,337.5" fill="#a9c6e6"/><rect x="776.19" y="340" width="5" height="3" fill="#a9c6e6"/><polygon points="776.19,340 781.19,340 778.16,334.5 773.16,334.5" fill="#a9c6e6"/></g>
<g opacity="0.7"><polygon points="780.69,343 780.69,340 777.66,334.5 777.66,337.5" fill="#fde3b8"/><rect x="780.69" y="340" width="6" height="3" fill="#fde3b8"/><polygon points="780.69,340 786.69,340 783.66,334.5 777.66,334.5" fill="#fde3b8"/></g>
<g><polygon points="764.19,343 764.19,321.6 761.16,316.6 761.16,338" fill="#e3a52a"/><rect x="764.19" y="321.6" width="10.5" height="21.4" fill="#fbbd3d"/><polygon points="764.19,321.6 774.69,321.6 771.66,316.6 761.16,316.6" fill="#fdd055"/></g>
<g opacity="0.45"><polygon points="787.84,343 787.84,341.5 784.03,336 784.03,337.5" fill="#f7a0b4"/><rect x="787.84" y="341.5" width="5" height="1.5" fill="#f7a0b4"/><polygon points="787.84,341.5 792.84,341.5 789.03,336 784.03,336" fill="#f7a0b4"/></g>
<g opacity="0.6"><polygon points="792.84,343 792.84,343 789.03,337.5 789.03,337.5" fill="#c8c0f0"/><rect x="792.84" y="343" width="1.5" height="0" fill="#c8c0f0"/><polygon points="792.84,343 794.34,343 790.53,337.5 789.03,337.5" fill="#c8c0f0"/></g>
<g opacity="0.45"><polygon points="798.84,343 798.84,339 795.03,333.5 795.03,337.5" fill="#b9a45c"/><rect x="798.84" y="339" width="8.5" height="4" fill="#b9a45c"/><polygon points="798.84,339 807.34,339 803.53,333.5 795.03,333.5" fill="#b9a45c"/></g>
<g opacity="0.5"><polygon points="805.84,343 805.84,340 802.03,334.5 802.03,337.5" fill="#a9c6e6"/><rect x="805.84" y="340" width="5" height="3" fill="#a9c6e6"/><polygon points="805.84,340 810.84,340 807.03,334.5 802.03,334.5" fill="#a9c6e6"/></g>
<g opacity="0.7"><polygon points="810.34,343 810.34,340 806.53,334.5 806.53,337.5" fill="#fde3b8"/><rect x="810.34" y="340" width="6" height="3" fill="#fde3b8"/><polygon points="810.34,340 816.34,340 812.53,334.5 806.53,334.5" fill="#fde3b8"/></g>
<g><polygon points="793.84,343 793.84,316.4 790.03,311.4 790.03,338" fill="#e3a52a"/><rect x="793.84" y="316.4" width="10.5" height="26.6" fill="#fbbd3d"/><polygon points="793.84,316.4 804.34,316.4 800.53,311.4 790.03,311.4" fill="#fdd055"/></g>
<g opacity="0.45"><polygon points="817.48,343 817.48,341.5 812.9,336 812.9,337.5" fill="#f7a0b4"/><rect x="817.48" y="341.5" width="5" height="1.5" fill="#f7a0b4"/><polygon points="817.48,341.5 822.48,341.5 817.9,336 812.9,336" fill="#f7a0b4"/></g>
<g opacity="0.6"><polygon points="822.48,343 822.48,343 817.9,337.5 817.9,337.5" fill="#c8c0f0"/><rect x="822.48" y="343" width="1.5" height="0" fill="#c8c0f0"/><polygon points="822.48,343 823.98,343 819.4,337.5 817.9,337.5" fill="#c8c0f0"/></g>
<g opacity="0.45"><polygon points="828.48,343 828.48,339 823.9,333.5 823.9,337.5" fill="#b9a45c"/><rect x="828.48" y="339" width="8.5" height="4" fill="#b9a45c"/><polygon points="828.48,339 836.98,339 832.4,333.5 823.9,333.5" fill="#b9a45c"/></g>
<g opacity="0.5"><polygon points="835.48,343 835.48,340 830.9,334.5 830.9,337.5" fill="#a9c6e6"/><rect x="835.48" y="340" width="5" height="3" fill="#a9c6e6"/><polygon points="835.48,340 840.48,340 835.9,334.5 830.9,334.5" fill="#a9c6e6"/></g>
<g opacity="0.7"><polygon points="839.98,343 839.98,340 835.4,334.5 835.4,337.5" fill="#fde3b8"/><rect x="839.98" y="340" width="6" height="3" fill="#fde3b8"/><polygon points="839.98,340 845.98,340 841.4,334.5 835.4,334.5" fill="#fde3b8"/></g>
<g><polygon points="823.48,343 823.48,317 818.9,312 818.9,338" fill="#e3a52a"/><rect x="823.48" y="317" width="10.5" height="26" fill="#fbbd3d"/><polygon points="823.48,317 833.98,317 829.4,312 818.9,312" fill="#fdd055"/></g>
</svg>
<svg width="900" height="563"><defs><filter id="sh" x="-20%" y="-20%" width="140%" height="160%"><feDropShadow dx="0.8" dy="1" stdDeviation="0.7" flood-color="#000" flood-opacity="0.4"/></filter></defs>
<path d="M528.7 285.8 h69.6 q3 0 3 3 v19.4 q0 3 -3 3 h-31.3 l-4 3.5 l-4 -3.5 h-30.3 q-3 0 -3 -3 v-19.4 q0 -3 3 -3 z" fill="#fff" stroke="#a0a0a0" stroke-width="0.7" filter="url(#sh)"/></svg>
<svg width="900" height="563">
<circle cx="481.6" cy="371.9" r="3.3" fill="#f5476b"/>
<circle cx="576.6" cy="371.9" r="3.3" fill="#2b8fe8"/>
<circle cx="630" cy="371.9" r="3.3" fill="#fbbd3d"/>
<circle cx="681.7" cy="371.9" r="3.3" fill="#2aa89d"/>
<circle cx="728" cy="371.9" r="3.3" fill="#8652f6"/>
<circle cx="799.3" cy="371.9" r="3.3" fill="#fb8a2b"/>
<circle cx="532.7" cy="302.7" r="1.4" fill="#fbbd3d"/>
<line x1="36" y1="493.5" x2="419" y2="493.5" stroke="#ccc" stroke-width="0.8"/>
<rect x="47.2" y="459.7" width="9.6" height="14.9" fill="#2b8fe8"/>
<rect x="47.2" y="475.2" width="9.6" height="17.9" fill="#fbbd3d"/>
<rect x="79.1" y="443.7" width="9.6" height="28" fill="#2b8fe8"/>
<rect x="79.1" y="472.3" width="9.6" height="20.8" fill="#fbbd3d"/>
<rect x="111" y="448.2" width="9.6" height="21.6" fill="#2b8fe8"/>
<rect x="111" y="470.4" width="9.6" height="22.7" fill="#fbbd3d"/>
<rect x="142.9" y="446" width="9.6" height="27.4" fill="#2b8fe8"/>
<rect x="142.9" y="474" width="9.6" height="19.1" fill="#fbbd3d"/>
<rect x="174.8" y="446" width="9.6" height="23.8" fill="#2b8fe8"/>
<rect x="174.8" y="470.4" width="9.6" height="22.7" fill="#fbbd3d"/>
<rect x="206.7" y="456.5" width="9.6" height="19.5" fill="#2b8fe8"/>
<rect x="206.7" y="476.6" width="9.6" height="16.5" fill="#fbbd3d"/>
<rect x="238.6" y="457.6" width="9.6" height="18.4" fill="#2b8fe8"/>
<rect x="238.6" y="476.6" width="9.6" height="16.5" fill="#fbbd3d"/>
<rect x="270.5" y="455" width="9.6" height="21" fill="#2b8fe8"/>
<rect x="270.5" y="476.6" width="9.6" height="16.5" fill="#fbbd3d"/>
<rect x="302.4" y="454.3" width="9.6" height="21.3" fill="#2b8fe8"/>
<rect x="302.4" y="476.2" width="9.6" height="16.9" fill="#fbbd3d"/>
<rect x="334.3" y="452.7" width="9.6" height="22.5" fill="#2b8fe8"/>
<rect x="334.3" y="475.8" width="9.6" height="17.3" fill="#fbbd3d"/>
<rect x="366.2" y="452.7" width="9.6" height="21.3" fill="#2b8fe8"/>
<rect x="366.2" y="474.6" width="9.6" height="18.5" fill="#fbbd3d"/>
<rect x="398.1" y="457.2" width="9.6" height="21.3" fill="#2b8fe8"/>
<rect x="398.1" y="479.1" width="9.6" height="14" fill="#fbbd3d"/>
<circle cx="173.3" cy="518.8" r="3.3" fill="#f5476b"/>
<circle cx="185.5" cy="518.8" r="3.3" fill="#2b8fe8"/>
<circle cx="243.2" cy="518.8" r="3.3" fill="#fbbd3d"/>
<defs><linearGradient id="rg" x1="0" y1="0" x2="0" y2="1"><stop offset="0" stop-color="#ff5050" stop-opacity="0.5"/><stop offset="1" stop-color="#f44" stop-opacity="0"/></linearGradient></defs>
<polygon points="491.8,514.1 523.5,513 555.2,502 586.9,497.6 618.6,498.6 650.3,467.7 682,482.6 713.7,489.3 745.4,496 777.1,498 808.8,495.8 840.5,493.6 840.5,519 491.8,519" fill="url(#rg)"/>
<polyline points="491.8,514.1 523.5,513 555.2,502 586.9,497.6 618.6,498.6 650.3,467.7 682,482.6 713.7,489.3 745.4,496 777.1,498 808.8,495.8 840.5,493.6" fill="none" stroke="#fff" stroke-width="1.2" stroke-linejoin="round" transform="translate(0,1.6)" opacity="0.8"/>
<polyline points="491.8,514.1 523.5,513 555.2,502 586.9,497.6 618.6,498.6 650.3,467.7 682,482.6 713.7,489.3 745.4,496 777.1,498 808.8,495.8 840.5,493.6" fill="none" stroke="#f81c1c" stroke-width="2" stroke-linejoin="round"/>
</svg>
<svg width="900" height="563" style="font-family:'Liberation Sans',sans-serif"><text x="58.6" y="60" font-size="6" fill="#222" textLength="24.2" lengthAdjust="spacingAndGlyphs" stroke="#222" stroke-width="0.15">Add Logo</text>
<text x="58.6" y="66.6" font-size="6" fill="#222" textLength="40.3" lengthAdjust="spacingAndGlyphs" stroke="#222" stroke-width="0.15">(250px x 125px)</text>
<text x="128" y="66.7" font-size="14.2" fill="#4d4d4d" textLength="166" lengthAdjust="spacingAndGlyphs" stroke="#4d4d4d" stroke-width="0.55">SEO Report Dashboard</text>
<text x="443.9" y="65" font-size="8.6" fill="#2b3240" font-weight="bold" textLength="38.4" lengthAdjust="spacingAndGlyphs">Report For</text>
<text x="542.8" y="66.2" font-size="8.4" fill="#2b3240" textLength="113.2" lengthAdjust="spacingAndGlyphs">August 01, 2025 - August 31, 2025</text>
<text x="23" y="117" font-size="7" fill="#2b3240" font-weight="bold" textLength="37" lengthAdjust="spacingAndGlyphs">GA4 Report</text>
<text x="460" y="116.8" font-size="7" fill="#2b3240" font-weight="bold" textLength="47.6" lengthAdjust="spacingAndGlyphs">Organic Traffic</text>
<text x="22.9" y="263.3" font-size="7" fill="#2b3240" font-weight="bold" textLength="69.1" lengthAdjust="spacingAndGlyphs">Conversions Vs Users</text>
<text x="459.7" y="263.5" font-size="7" fill="#2b3240" font-weight="bold" textLength="69.3" lengthAdjust="spacingAndGlyphs">Conversions Tracking</text>
<text x="23.2" y="409.8" font-size="7" fill="#2b3240" font-weight="bold" textLength="65.5" lengthAdjust="spacingAndGlyphs">Engagement Session</text>
<text x="460.3" y="409.7" font-size="7" fill="#2b3240" font-weight="bold" textLength="53.6" lengthAdjust="spacingAndGlyphs">TOTAL SESSIONS</text>
<text x="23.1" y="556" font-size="7" fill="#2b3240" font-weight="bold" textLength="46.2" lengthAdjust="spacingAndGlyphs">CONVERSIONS</text>
<text x="134.2" y="133.9" font-size="9.2" fill="#27303d" font-weight="bold" textLength="62.2" lengthAdjust="spacingAndGlyphs">First user source</text>
<text x="297" y="133.9" font-size="9.2" fill="#27303d" font-weight="bold" textLength="64.2" lengthAdjust="spacingAndGlyphs">Engagement rate</text>
<text x="570.6" y="133.9" font-size="9.2" fill="#27303d" font-weight="bold" textLength="65.1" lengthAdjust="spacingAndGlyphs">Source / medium</text>
<text x="763.5" y="133.9" font-size="9.2" fill="#27303d" font-weight="bold" textLength="65.8" lengthAdjust="spacingAndGlyphs">Engaged sessions</text>
<text x="141" y="149.8" font-size="8.4" fill="#323a48" textLength="39.61" lengthAdjust="spacingAndGlyphs">Google Ads</text>
<text x="297" y="149.8" font-size="8.4" fill="#323a48" textLength="4.26" lengthAdjust="spacingAndGlyphs">1</text>
<text x="141" y="165.6" font-size="8.4" fill="#323a48" textLength="66" lengthAdjust="spacingAndGlyphs">growdigitalhub.com</text>
<text x="297" y="165.6" font-size="8.4" fill="#323a48" textLength="4.26" lengthAdjust="spacingAndGlyphs">1</text>
<text x="141" y="181.3" font-size="8.4" fill="#323a48" textLength="40.31" lengthAdjust="spacingAndGlyphs">perplexity.ai</text>
<text x="297" y="181.3" font-size="8.4" fill="#323a48" textLength="4.26" lengthAdjust="spacingAndGlyphs">1</text>
<text x="141" y="196.6" font-size="8.4" fill="#323a48" textLength="47.69" lengthAdjust="spacingAndGlyphs">facebook.com</text>
<text x="297" y="196.6" font-size="8.4" fill="#323a48" textLength="10.65" lengthAdjust="spacingAndGlyphs">0.6</text>
<text x="141" y="211.9" font-size="8.4" fill="#323a48" textLength="23" lengthAdjust="spacingAndGlyphs">google</text>
<text x="297" y="211.9" font-size="8.4" fill="#323a48" textLength="14.91" lengthAdjust="spacingAndGlyphs">0.59</text>
<text x="141" y="227.8" font-size="8.4" fill="#323a48" textLength="40.88" lengthAdjust="spacingAndGlyphs">duckduckgo</text>
<text x="297" y="227.8" font-size="8.4" fill="#323a48" textLength="10.65" lengthAdjust="spacingAndGlyphs">0.5</text>
<text x="577.4" y="149.8" font-size="8.4" fill="#323a48" textLength="52.36" lengthAdjust="spacingAndGlyphs">(direct) / (none)</text>
<text x="763.5" y="149.8" font-size="8.4" fill="#323a48" textLength="8.52" lengthAdjust="spacingAndGlyphs">13</text>
<text x="577.4" y="165.6" font-size="8.4" fill="#323a48" textLength="54.51" lengthAdjust="spacingAndGlyphs">google / organic</text>
<text x="763.5" y="165.6" font-size="8.4" fill="#323a48" textLength="8.52" lengthAdjust="spacingAndGlyphs">10</text>
<text x="577.4" y="181.3" font-size="8.4" fill="#323a48" textLength="72.38" lengthAdjust="spacingAndGlyphs">chatgpt.com / referral</text>
<text x="763.5" y="181.3" font-size="8.4" fill="#323a48" textLength="4.26" lengthAdjust="spacingAndGlyphs">6</text>
<text x="577.4" y="196.6" font-size="8.4" fill="#323a48" textLength="84.72" lengthAdjust="spacingAndGlyphs">statcounter.com / referral</text>
<text x="763.5" y="196.6" font-size="8.4" fill="#323a48" textLength="4.26" lengthAdjust="spacingAndGlyphs">5</text>
<text x="577.4" y="211.9" font-size="8.4" fill="#323a48" textLength="73.23" lengthAdjust="spacingAndGlyphs">linkedin.com / referral</text>
<text x="763.5" y="211.9" font-size="8.4" fill="#323a48" textLength="4.26" lengthAdjust="spacingAndGlyphs">4</text>
<text x="577.4" y="227.8" font-size="8.4" fill="#323a48" textLength="104.76" lengthAdjust="spacingAndGlyphs">portal-page / nav-logout-button</text>
<text x="763.5" y="227.8" font-size="8.4" fill="#323a48" textLength="4.26" lengthAdjust="spacingAndGlyphs">4</text>
<text x="45" y="278.8" font-size="5.6" fill="#555" text-anchor="end">1500</text>
<text x="45" y="301.7" font-size="5.6" fill="#555" text-anchor="end">1000</text>
<text x="45" y="324.6" font-size="5.6" fill="#555" text-anchor="end">500</text>
<text x="45" y="347.1" font-size="5.6" fill="#555" text-anchor="end">0</text>
<text x="69.6" y="357.8" font-size="5.6" fill="#555" text-anchor="middle">Sep</text>
<text x="99.2" y="357.8" font-size="5.6" fill="#555" text-anchor="middle">Oct</text>
<text x="128.8" y="357.8" font-size="5.6" fill="#555" text-anchor="middle">Nov</text>
<text x="158.4" y="357.8" font-size="5.6" fill="#555" text-anchor="middle">Dec</text>
<text x="188" y="357.8" font-size="5.6" fill="#555" text-anchor="middle">Jan</text>
<text x="217.6" y="357.8" font-size="5.6" fill="#555" text-anchor="middle">Feb</text>
<text x="247.2" y="357.8" font-size="5.6" fill="#555" text-anchor="middle">Mar</text>
<text x="276.8" y="357.8" font-size="5.6" fill="#555" text-anchor="middle">Apr</text>
<text x="306.4" y="357.8" font-size="5.6" fill="#555" text-anchor="middle">May</text>
<text x="336" y="357.8" font-size="5.6" fill="#555" text-anchor="middle">Jun</text>
<text x="365.6" y="357.8" font-size="5.6" fill="#555" text-anchor="middle">Jul</text>
<text x="395.2" y="357.8" font-size="5.6" fill="#555" text-anchor="middle">Aug</text>
<text x="182" y="374.3" font-size="7.4" fill="#333" font-weight="bold" textLength="40" lengthAdjust="spacingAndGlyphs">Conversions</text>
<text x="235.6" y="374.3" font-size="7.4" fill="#333" font-weight="bold" textLength="35.1" lengthAdjust="spacingAndGlyphs">Total users</text>
<text x="479" y="279" font-size="5.6" fill="#555" text-anchor="end">15k</text>
<text x="479" y="301.7" font-size="5.6" fill="#555" text-anchor="end">10k</text>
<text x="479" y="324.7" font-size="5.6" fill="#555" text-anchor="end">5k</text>
<text x="479" y="346.8" font-size="5.6" fill="#555" text-anchor="end">0</text>
<text x="503.6" y="358" font-size="5.6" fill="#555" text-anchor="middle">Sep</text>
<text x="533.4" y="358" font-size="5.6" fill="#555" text-anchor="middle">Oct</text>
<text x="563.2" y="358" font-size="5.6" fill="#555" text-anchor="middle">Nov</text>
<text x="593" y="358" font-size="5.6" fill="#555" text-anchor="middle">Dec</text>
<text x="622.8" y="358" font-size="5.6" fill="#555" text-anchor="middle">Jan</text>
<text x="652.6" y="358" font-size="5.6" fill="#555" text-anchor="middle">Feb</text>
<text x="682.4" y="358" font-size="5.6" fill="#555" text-anchor="middle">Mar</text>
<text x="712.2" y="358" font-size="5.6" fill="#555" text-anchor="middle">Apr</text>
<text x="742" y="358" font-size="5.6" fill="#555" text-anchor="middle">May</text>
<text x="771.8" y="358" font-size="5.6" fill="#555" text-anchor="middle">Jun</text>
<text x="801.6" y="358" font-size="5.6" fill="#555" text-anchor="middle">Jul</text>
<text x="831.4" y="358" font-size="5.6" fill="#555" text-anchor="middle">Aug</text>
<text x="486.5" y="374.6" font-size="7.4" fill="#333" font-weight="bold" textLength="82.3" lengthAdjust="spacingAndGlyphs">Average session duration</text>
<text x="581.9" y="374.6" font-size="7.4" fill="#333" font-weight="bold" textLength="40.1" lengthAdjust="spacingAndGlyphs">Conversions</text>
<text x="635.1" y="374.6" font-size="7.4" fill="#333" font-weight="bold" textLength="39.9" lengthAdjust="spacingAndGlyphs">Event count</text>
<text x="687" y="374.6" font-size="7.4" fill="#333" font-weight="bold" textLength="33" lengthAdjust="spacingAndGlyphs">New users</text>
<text x="732.8" y="374.6" font-size="7.4" fill="#333" font-weight="bold" textLength="58.1" lengthAdjust="spacingAndGlyphs">Views per session</text>
<text x="804.6" y="374.6" font-size="7.4" fill="#333" font-weight="bold" textLength="34.8" lengthAdjust="spacingAndGlyphs">Total users</text>
<text x="530.4" y="296.3" font-size="6" fill="#333">Nov</text>
<text x="536.6" y="305.8" font-size="8.6" fill="#333" textLength="60" lengthAdjust="spacingAndGlyphs">Event count: <tspan font-weight="bold">5 893</tspan></text>
<text x="27.5" y="421" font-size="5.6" fill="#555" text-anchor="end">2</text>
<text x="27.5" y="458.2" font-size="5.6" fill="#555" text-anchor="end">1</text>
<text x="27.5" y="495.3" font-size="5.6" fill="#555" text-anchor="end">0</text>
<text x="52" y="507.3" font-size="5.6" fill="#555" text-anchor="middle">Sep</text>
<text x="83.9" y="507.3" font-size="5.6" fill="#555" text-anchor="middle">Oct</text>
<text x="115.8" y="507.3" font-size="5.6" fill="#555" text-anchor="middle">Nov</text>
<text x="147.7" y="507.3" font-size="5.6" fill="#555" text-anchor="middle">Dec</text>
<text x="179.6" y="507.3" font-size="5.6" fill="#555" text-anchor="middle">Jan</text>
<text x="211.5" y="507.3" font-size="5.6" fill="#555" text-anchor="middle">Feb</text>
<text x="243.4" y="507.3" font-size="5.6" fill="#555" text-anchor="middle">Mar</text>
<text x="275.3" y="507.3" font-size="5.6" fill="#555" text-anchor="middle">Apr</text>
<text x="307.2" y="507.3" font-size="5.6" fill="#555" text-anchor="middle">May</text>
<text x="339.1" y="507.3" font-size="5.6" fill="#555" text-anchor="middle">Jun</text>
<text x="371" y="507.3" font-size="5.6" fill="#555" text-anchor="middle">Jul</text>
<text x="402.9" y="507.3" font-size="5.6" fill="#555" text-anchor="middle">Aug</text>
<text x="190.6" y="521.5" font-size="7.4" fill="#333" textLength="45.4" lengthAdjust="spacingAndGlyphs">(not provided)</text>
<text x="248.3" y="521.5" font-size="7.4" fill="#333" textLength="26.7" lengthAdjust="spacingAndGlyphs">(not set)</text>
<text x="468" y="450.6" font-size="5.6" fill="#555" text-anchor="end">2k</text>
<text x="468" y="485.4" font-size="5.6" fill="#555" text-anchor="end">1k</text>
<text x="468" y="520.7" font-size="5.6" fill="#555" text-anchor="end">0</text>
<text x="652" y="439.8" font-size="19" fill="#ec1a1a" textLength="31.8" lengthAdjust="spacingAndGlyphs" stroke="#ec1a1a" stroke-width="0.3">690</text></svg>
</body></html>
